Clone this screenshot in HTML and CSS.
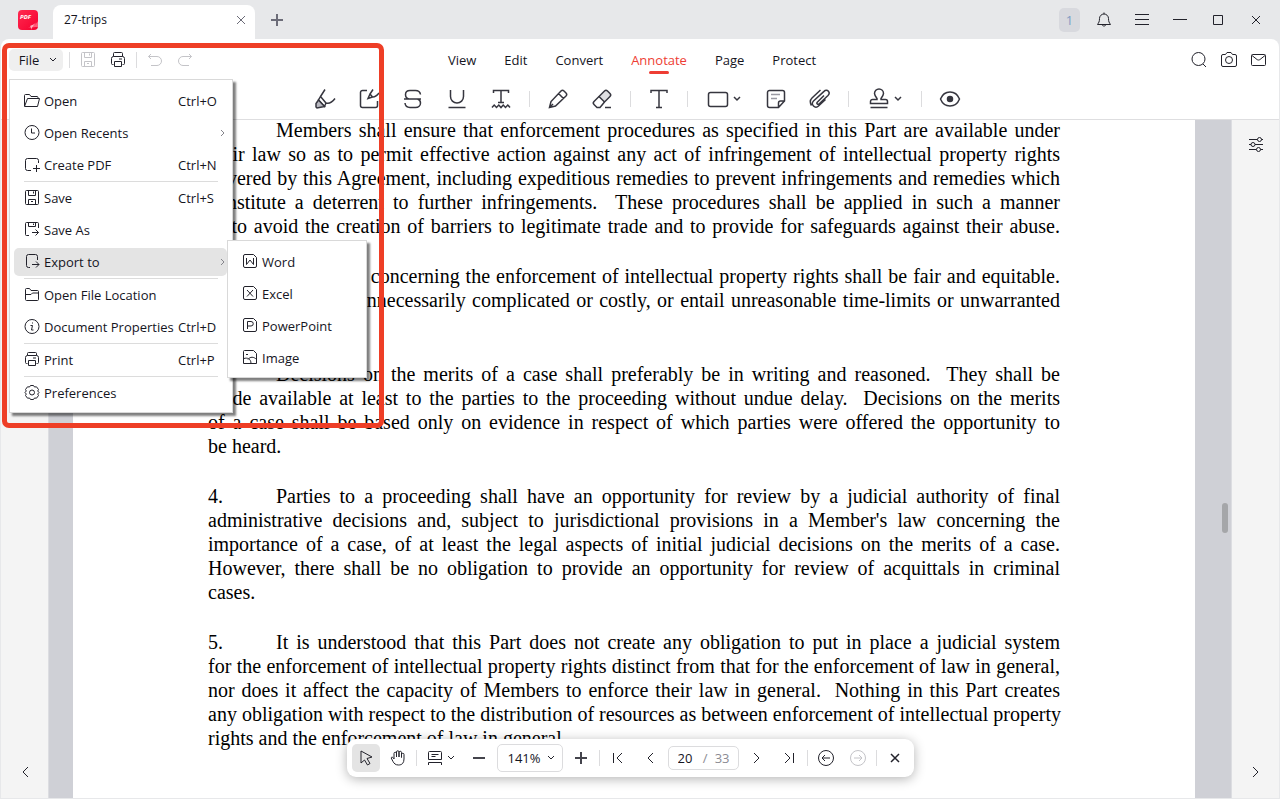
FILE: index.html
```
<!DOCTYPE html>
<html lang="en">
<head>
    <meta charset="UTF-8">
    <meta name="viewport" content="width=device-width, initial-scale=1.0">
    <title>27-trips</title>
    <link rel="stylesheet" href="styles.css">
</head>

<body>
    <header class="titlebar">
        <svg class="logo" viewBox="0 0 20 20" aria-hidden="true">
            <defs>
                <linearGradient id="logoRed" x1="0" y1="0" x2="1" y2="1">
                    <stop offset="0" stop-color="#ff2a50"/>
                    <stop offset="1" stop-color="#f5002f"/>
                </linearGradient>
            </defs>
            <rect width="20" height="20" rx="4" fill="url(#logoRed)"/>
            <path d="M20 11c-1 3-5 5-10 7 4-1 8-1 10-1z" fill="#ff5c78"/>
            <path d="M19 12c-2 2-5 3-7 4 1 1 1 2 1 4 1-3 2-4 6-8z" fill="#ffb3c0"/>
            <text x="2" y="9" class="logo-text">PDF</text>
        </svg>
        <div class="tab">
            <span>27-trips</span>
            <button type="button" class="tab-close" aria-label="Close tab">
                <svg width="10" height="10" viewBox="0 0 10 10"><path d="M1 1l8 8M9 1L1 9"/></svg>
            </button>
        </div>
        <button type="button" class="new-tab" aria-label="New tab">
            <svg width="12" height="12" viewBox="0 0 12 12"><path d="M6 0v12M0 6h12"/></svg>
        </button>
        <div class="window-buttons">
            <button type="button" class="badge">1</button>
            <button type="button" aria-label="Notifications">
                <svg width="16" height="16" viewBox="0 0 16 16"><path d="M8 .5v1.500M3.500 6.500a4.500 4.500 0 0 1 9 0c0 3.500.8 4 2 6H1.500c1.200-2 2-2.500 2-6zM6 12.500c.5 2 3.500 2 4 0"/></svg>
            </button>
            <button type="button" aria-label="Menu">
                <svg width="14" height="12" viewBox="0 0 14 12"><path d="M0 .5h14M0 5.500h14M0 10.500h14"/></svg>
            </button>
            <button type="button" aria-label="Minimize">
                <svg width="14" height="12" viewBox="0 0 14 12"><path d="M0 5.500h14"/></svg>
            </button>
            <button type="button" aria-label="Maximize">
                <svg width="10" height="10" viewBox="0 0 10 10"><path d="M.5.500h9v9h-9z"/></svg>
            </button>
            <button type="button" aria-label="Close">
                <svg width="10" height="10" viewBox="0 0 10 10"><path d="M1 1l8 8M9 1L1 9"/></svg>
            </button>
        </div>
    </header>

    <div class="app">
        <div class="ribbon">
            <div class="ribbon-top">
                <div class="quick">
                    <div class="file">
                        <button type="button" class="file-button">File
                            <svg width="8" height="6" viewBox="0 0 8 6"><path d="M1 1l3 3 3-3"/></svg>
                        </button>
                        <ul class="menu">
                            <li><button type="button">
                                <svg viewBox="0 0 16 16"><path d="M.5 13V2.500c0-.6.400-1 1-1h4L7 3.500h6c.6 0 1 .4 1 1v1M.5 13.500l3-8h12l-2 8z"/></svg>
                                <span>Open</span><kbd>Ctrl+O</kbd></button></li>
                            <li><button type="button">
                                <svg viewBox="0 0 16 16"><circle cx="8" cy="7.500" r="7"/><path d="M7.500 3.500v4.500H11"/></svg>
                                <span>Open Recents</span>
                                <svg class="arrow" viewBox="0 0 5 8"><path d="M1 1l3 3-3 3"/></svg></button></li>
                            <li><button type="button">
                                <svg viewBox="0 0 16 16"><path d="M7 13.500H3.500a2 2 0 0 1-2-2v-8a2 2 0 0 1 2-2h9a2 2 0 0 1 2 2V6M12.500 8v7M9 11.500h7"/></svg>
                                <span>Create PDF</span><kbd>Ctrl+N</kbd></button></li>
                            <li class="divider"></li>
                            <li><button type="button">
                                <svg viewBox="0 0 16 16"><path d="M2.500 .5h11a1 1 0 0 1 1 1v12a1 1 0 0 1-1 1h-11a1 1 0 0 1-1-1v-12a1 1 0 0 1 1-1zM4.500 .5v5h7v-5M4.500 14.500v-5h7v5M9.500 1.500v2M7 11.500h2"/></svg>
                                <span>Save</span><kbd>Ctrl+S</kbd></button></li>
                            <li><button type="button">
                                <svg viewBox="0 0 16 16"><path d="M5 13.500H2.500a1 1 0 0 1-1-1v-11a1 1 0 0 1 1-1h11a1 1 0 0 1 1 1V6M4.500 .5v4h7v-4M9.500 1.500v1.500M8 10.500h6.500M11.500 7.500l3 3-3 3"/></svg>
                                <span>Save As</span></button></li>
                            <li class="open"><button type="button">
                                <svg viewBox="0 0 16 16"><path d="M6 13.500H4.500a2 2 0 0 1-2-2v-9a2 2 0 0 1 2-2h7a2 2 0 0 1 2 2V6M8 10.500h7M12 7.500l3 3-3 3"/></svg>
                                <span>Export to</span>
                                <svg class="arrow" viewBox="0 0 5 8"><path d="M1 1l3 3-3 3"/></svg></button>
                                <ul class="menu submenu">
                                    <li><button type="button">
                                        <svg viewBox="0 0 16 16"><path d="M3 .5h8.500l3 3V12a1.500 1.500 0 0 1-1.500 1.500H3A1.500 1.500 0 0 1 1.500 12V2A1.500 1.500 0 0 1 3 .5zM4.500 4v6.500L8 6l3.500 4.500V4"/></svg>
                                        <span>Word</span></button></li>
                                    <li><button type="button">
                                        <svg viewBox="0 0 16 16"><path d="M3 .5h8.500l3 3V12a1.500 1.500 0 0 1-1.500 1.500H3A1.500 1.500 0 0 1 1.500 12V2A1.500 1.500 0 0 1 3 .5zM5 4l6 6.500M11 4l-6 6.500"/></svg>
                                        <span>Excel</span></button></li>
                                    <li><button type="button">
                                        <svg viewBox="0 0 16 16"><path d="M3 .5h8.500l3 3V12a1.500 1.500 0 0 1-1.500 1.500H3A1.500 1.500 0 0 1 1.500 12V2A1.500 1.500 0 0 1 3 .5zM5.500 11V3.500h3.500a2 2 0 0 1 0 4.500H5.500"/></svg>
                                        <span>PowerPoint</span></button></li>
                                    <li><button type="button">
                                        <svg viewBox="0 0 16 16"><path d="M2.500 .5h9l3 3v10h-13v-12a1 1 0 0 1 1-1zM2 8.500c3-1 7 0 7 5M6 9.500c2-3 6-3 8.500 0M4 4.500h2"/></svg>
                                        <span>Image</span></button></li>
                                </ul>
                            </li>
                            <li class="divider"></li>
                            <li><button type="button">
                                <svg viewBox="0 0 16 16"><path d="M1.500 12.500v-10c0-.6.400-1 1-1h3l1.500 2h6.500c.6 0 1 .4 1 1v8c0 .6-.4 1-1 1h-11c-.6 0-1-.4-1-1zM1.500 7.500H7l1.500-1.500h6"/></svg>
                                <span>Open File Location</span></button></li>
                            <li><button type="button">
                                <svg viewBox="0 0 16 16"><circle cx="8" cy="7.500" r="7"/><path d="M6.500 6.500h2l-1 4.500h2M8.500 3.500v1"/></svg>
                                <span>Document Properties</span><kbd>Ctrl+D</kbd></button></li>
                            <li class="divider"></li>
                            <li><button type="button">
                                <svg viewBox="0 0 16 16"><path d="M3.500 11.500h-1a1 1 0 0 1-1-1v-5a2 2 0 0 1 2-2h9a2 2 0 0 1 2 2v5a1 1 0 0 1-1 1h-1M3.500 3.500v-2a1 1 0 0 1 1-1h7a1 1 0 0 1 1 1v2M4.500 8.500h7v5h-7zM9 6h3"/></svg>
                                <span>Print</span><kbd>Ctrl+P</kbd></button></li>
                            <li class="divider"></li>
                            <li><button type="button">
                                <svg viewBox="0 0 16 16"><path d="M6.500.500h3l1 1.500 2-.2 2 2.700-.8 1.500L15 7.500 13.700 9l.8 1.500-2 2.700-2-.2-1 1.500h-3l-1-1.500-2 .2-2-2.700L2.300 9 1 7.500 2.300 6l-.8-1.500 2-2.700 2 .2z"/><circle cx="8" cy="7.500" r="2.500"/></svg>
                                <span>Preferences</span></button></li>
                        </ul>
                    </div>
                    <i class="line"></i>
                    <button type="button" class="icon faded" aria-label="Save">
                        <svg width="16" height="16" viewBox="0 0 16 16"><path d="M2.500 .5h11a1 1 0 0 1 1 1v12a1 1 0 0 1-1 1h-11a1 1 0 0 1-1-1v-12a1 1 0 0 1 1-1zM4.500 .5v5h7v-5M4.500 14.500v-5h7v5M9.500 1.500v2M7 11.500h2"/></svg>
                    </button>
                    <button type="button" class="icon" aria-label="Print">
                        <svg width="16" height="16" viewBox="0 0 16 16"><path d="M3.500 12.500h-1a1 1 0 0 1-1-1v-5a2 2 0 0 1 2-2h9a2 2 0 0 1 2 2v5a1 1 0 0 1-1 1h-1M3.500 4.500v-3a1 1 0 0 1 1-1h7a1 1 0 0 1 1 1v3M4.500 9.500h7v5h-7zM9 7h3"/></svg>
                    </button>
                    <i class="line"></i>
                    <button type="button" class="icon faded" aria-label="Undo">
                        <svg width="16" height="16" viewBox="0 0 16 16"><path d="M1.500 4.500H10a4.500 4.500 0 0 1 0 9H4M4 2L1.500 4.500 4 7"/></svg>
                    </button>
                    <button type="button" class="icon faded" aria-label="Redo">
                        <svg width="16" height="16" viewBox="0 0 16 16"><path d="M14.500 4.500H6a4.500 4.500 0 0 0 0 9h6M12 2l2.500 2.500L12 7"/></svg>
                    </button>
                </div>
                <nav class="tabs">
                    <a href="#view">View</a>
                    <a href="#edit">Edit</a>
                    <a href="#convert">Convert</a>
                    <a href="#annotate" class="active">Annotate</a>
                    <a href="#page">Page</a>
                    <a href="#protect">Protect</a>
                </nav>
                <div class="actions">
                    <button type="button" class="icon" aria-label="Search">
                        <svg width="16" height="16" viewBox="0 0 16 16"><circle cx="7.500" cy="7" r="6.500"/><path d="M12 12l3 3"/></svg>
                    </button>
                    <button type="button" class="icon" aria-label="Snapshot">
                        <svg width="16" height="16" viewBox="0 0 16 16"><path d="M2 2.500h2.500L6 .5h4l1.500 2H14A1.500 1.500 0 0 1 15.500 4v9a1.500 1.500 0 0 1-1.500 1.500H2A1.500 1.500 0 0 1 .5 13V4A1.500 1.500 0 0 1 2 2.500z"/><circle cx="8" cy="8" r="3.500"/></svg>
                    </button>
                    <button type="button" class="icon" aria-label="Mail">
                        <svg width="16" height="16" viewBox="0 0 16 16"><rect x=".5" y="2.500" width="14" height="11" rx="1"/><path d="M1 3.500l5 4c1 .7 2 .7 3 0l5-4"/></svg>
                    </button>
                </div>
            </div>

            <div class="tools">
                <button type="button" aria-label="Highlight">
                    <svg width="22" height="22" viewBox="0 0 22 22"><path d="M11 1.500L6.500 8.500l5.500 6.500c3 1 6-.5 9-4.500M6.500 8.500L4.500 12l6 6.500L12 15"/><path d="M4.500 12L2 15.500v3.500l1 1 7.500-1.500z" fill="#b9b9c1"/></svg>
                </button>
                <button type="button" aria-label="Area highlight">
                    <svg width="22" height="22" viewBox="0 0 22 22"><path d="M9 2.500H4.500a2 2 0 0 0-2 2v13a2 2 0 0 0 2 2h13a2 2 0 0 0 2-2V13M15 1.500l-3 4.500 2.500 3c2 .3 4-1 6.500-4M12 6l-2 4.500 4.500-1.500"/></svg>
                </button>
                <button type="button" aria-label="Strikethrough">
                    <svg width="22" height="22" viewBox="0 0 22 22"><path d="M2 11h17M18.500 6.500c-.5-3-3-4-5-4H8c-3 0-4.500 2-4.500 4S5 10.500 7 11M3 15c.3 3 2.500 4.500 5 4.500h5.500c3 0 5-2 5-4.500 0-2-1.500-3.500-3-4"/></svg>
                </button>
                <button type="button" aria-label="Underline">
                    <svg width="22" height="22" viewBox="0 0 22 22"><path d="M4.500 2v6.500a6.500 6.500 0 0 0 13 0V2M2.500 19.500h17"/></svg>
                </button>
                <button type="button" aria-label="Squiggly underline">
                    <svg width="22" height="22" viewBox="0 0 22 22"><path d="M3.500 5V2.500h15V5M11 2.500v12M8 14.500h6M2 19.500l2.200-2.500 2.300 2.500L8.800 17l2.200 2.500 2.200-2.500 2.300 2.500 2.300-2.500 2.200 2.500"/></svg>
                </button>
                <i class="line"></i>
                <button type="button" aria-label="Pencil">
                    <svg width="22" height="22" viewBox="0 0 22 22"><path d="M2.500 19.500l1.500-6L14 3c1-1 2-1 3 0l2 2c1 1 1 2 0 3L8.500 18zM11.500 5.500l5 5M2.500 19.500l3.500-3.500"/></svg>
                </button>
                <button type="button" aria-label="Eraser">
                    <svg width="22" height="22" viewBox="0 0 22 22"><path d="M8 8.500l5.500-5.500c1-1 2-1 3 0L19 5.500c1 1 1 2 0 3L13.500 14z" fill="#dfdfe2"/><path d="M8 8.500L3 13.500c-1 1-1 2 0 3l3 3h3l4.500-5.500M14 19.500h6"/></svg>
                </button>
                <i class="line"></i>
                <button type="button" aria-label="Text">
                    <svg width="22" height="22" viewBox="0 0 22 22"><path d="M3 5V2.500h16V5M11 2.500v17M8 19.500h6"/></svg>
                </button>
                <i class="line"></i>
                <button type="button" class="wide" aria-label="Shapes">
                    <svg width="22" height="22" viewBox="0 0 22 22"><rect x="1.500" y="4.500" width="19" height="14" rx="2"/></svg>
                    <svg width="8" height="6" viewBox="0 0 8 6"><path d="M1 1l3 3 3-3"/></svg>
                </button>
                <button type="button" aria-label="Note">
                    <svg width="22" height="22" viewBox="0 0 22 22"><path d="M4.500 2.500h13a2 2 0 0 1 2 2V13l-6 6.500h-9a2 2 0 0 1-2-2v-13a2 2 0 0 1 2-2zM13.500 19.500V15a2 2 0 0 1 2-2h4"/><path d="M6 6.500h9M6 10.500h6" stroke="#9a9aa3"/></svg>
                </button>
                <button type="button" aria-label="Attachment">
                    <svg width="22" height="22" viewBox="0 0 22 22"><path d="M15 7.500L8.500 14c-.7.700-.7 1.500-.2 2s1.300.5 2-.2l8.700-8.300c1.500-1.500 1.500-3 .4-4.300s-3-1.200-4.400.2L4.500 13c-1.500 1.500-1.500 3.500 0 5s3.500 1.500 5 0l7-6.500M11.500 2L3 10c-2 2-2 5-.5 7.500"/></svg>
                </button>
                <i class="line"></i>
                <button type="button" class="wide" aria-label="Stamp">
                    <svg width="22" height="22" viewBox="0 0 22 22"><path d="M9 10.500C7.500 8.500 6.500 7 6.500 5.500a4.500 4.500 0 0 1 9 0c0 1.500-1 3-2.500 5v1h4.500a2 2 0 0 1 2 2v2h-17v-2a2 2 0 0 1 2-2H9zM2.500 19.500h17"/></svg>
                    <svg width="8" height="6" viewBox="0 0 8 6"><path d="M1 1l3 3 3-3"/></svg>
                </button>
                <i class="line"></i>
                <button type="button" aria-label="Show annotations">
                    <svg width="22" height="22" viewBox="0 0 22 22"><path d="M1.500 11C3.500 6 7 4 11 4s7.500 2 9.500 7c-2 5-5.500 7-9.500 7s-7.500-2-9.500-7z"/><circle cx="11" cy="11" r="2.500" fill="#36363f"/></svg>
                </button>
            </div>
        </div>

        <div class="workspace">
            <aside class="side">
                <button type="button" class="icon" aria-label="Expand left panel">
                    <svg width="8" height="12" viewBox="0 0 8 12"><path d="M7 1L2 6l5 5"/></svg>
                </button>
            </aside>

            <main class="viewer">
                <article class="paper">
                    <p>
                        <span><b class="num"></b>Members shall ensure that enforcement procedures as specified in this Part are available under</span>
                        <span>their law so as to permit effective action against any act of infringement of intellectual property rights</span>
                        <span>covered by this Agreement, including expeditious remedies to prevent infringements and remedies which</span>
                        <span>constitute a deterrent to further infringements.&nbsp; These procedures shall be applied in such a manner</span>
                        <span>as to avoid the creation of barriers to legitimate trade and to provide for safeguards against their abuse.</span>
                    </p>
                    <p>
                        <span><b class="num">2.</b>Procedures concerning the enforcement of intellectual property rights shall be fair and equitable.</span>
                        <span>They shall not be unnecessarily complicated or costly, or entail unreasonable time-limits or unwarranted</span>
                        <span class="last">delays.</span>
                    </p>
                    <p>
                        <span><b class="num">3.</b>Decisions on the merits of a case shall preferably be in writing and reasoned.&nbsp; They shall be</span>
                        <span>made available at least to the parties to the proceeding without undue delay.&nbsp; Decisions on the merits</span>
                        <span>of a case shall be based only on evidence in respect of which parties were offered the opportunity to</span>
                        <span class="last">be heard.</span>
                    </p>
                    <p>
                        <span><b class="num">4.</b>Parties to a proceeding shall have an opportunity for review by a judicial authority of final</span>
                        <span>administrative decisions and, subject to jurisdictional provisions in a Member's law concerning the</span>
                        <span>importance of a case, of at least the legal aspects of initial judicial decisions on the merits of a case.</span>
                        <span>However, there shall be no obligation to provide an opportunity for review of acquittals in criminal</span>
                        <span class="last">cases.</span>
                    </p>
                    <p>
                        <span><b class="num">5.</b>It is understood that this Part does not create any obligation to put in place a judicial system</span>
                        <span>for the enforcement of intellectual property rights distinct from that for the enforcement of law in general,</span>
                        <span>nor does it affect the capacity of Members to enforce their law in general.&nbsp; Nothing in this Part creates</span>
                        <span>any obligation with respect to the distribution of resources as between enforcement of intellectual property</span>
                        <span class="last">rights and the enforcement of law in general.</span>
                    </p>
                </article>
                <div class="scroll-thumb"></div>

                <div class="pager-wrap">
                    <div class="pager">
                        <button type="button" class="selected" aria-label="Select">
                            <svg width="16" height="18" viewBox="0 0 16 18"><path d="M3 2l11 6-5 1.500 3 5-2.500 1.500-3-5L3 14z"/></svg>
                        </button>
                        <button type="button" aria-label="Hand">
                            <svg width="16" height="16" viewBox="0 0 16 16"><path d="M4 9V3.500a1.250 1.250 0 0 1 2.500 0V7 2a1.250 1.250 0 0 1 2.500 0v5-4.500a1.250 1.250 0 0 1 2.500 0V7.500 4.500a1.250 1.250 0 0 1 2.500 0V9c0 4-2 6-5.500 6-3 0-4.500-1.500-5.500-3.500L1.200 8C1.500 6.500 3 7 4 9"/></svg>
                        </button>
                        <i class="line"></i>
                        <button type="button" class="wide" aria-label="Display mode">
                            <svg width="16" height="16" viewBox="0 0 16 16"><path d="M2.500 1.500h11a1 1 0 0 1 1 1v7h-13v-7a1 1 0 0 1 1-1zM4.500 4.500h7M4.500 6.500h4M1.500 15v-2.500h13V15"/></svg>
                            <svg width="8" height="6" viewBox="0 0 8 6"><path d="M1 1l3 3 3-3"/></svg>
                        </button>
                        <button type="button" aria-label="Zoom out">
                            <svg class="bold" width="12" height="12" viewBox="0 0 12 12"><path d="M0 6h12"/></svg>
                        </button>
                        <label class="zoom">
                            <select aria-label="Zoom level"><option>141%</option></select>
                            <svg width="8" height="6" viewBox="0 0 8 6"><path d="M1 1l3 3 3-3"/></svg>
                        </label>
                        <button type="button" aria-label="Zoom in">
                            <svg class="bold" width="12" height="12" viewBox="0 0 12 12"><path d="M6 0v12M0 6h12"/></svg>
                        </button>
                        <i class="line"></i>
                        <button type="button" aria-label="First page">
                            <svg width="10" height="12" viewBox="0 0 10 12"><path d="M.5 1v10M9 1L4 6l5 5"/></svg>
                        </button>
                        <button type="button" aria-label="Previous page">
                            <svg width="8" height="12" viewBox="0 0 8 12"><path d="M7 1L2 6l5 5"/></svg>
                        </button>
                        <label class="page-number">
                            <input type="text" value="20" aria-label="Page number">
                            <span>/</span><span>33</span>
                        </label>
                        <button type="button" aria-label="Next page">
                            <svg width="8" height="12" viewBox="0 0 8 12"><path d="M1 1l5 5-5 5"/></svg>
                        </button>
                        <button type="button" aria-label="Last page">
                            <svg width="10" height="12" viewBox="0 0 10 12"><path d="M9.500 1v10M1 1l5 5-5 5"/></svg>
                        </button>
                        <i class="line"></i>
                        <button type="button" aria-label="Back">
                            <svg width="18" height="18" viewBox="0 0 18 18"><circle cx="9" cy="9" r="7.500"/><path d="M13 9H5M8 6L5 9l3 3"/></svg>
                        </button>
                        <button type="button" class="faded" aria-label="Forward">
                            <svg width="18" height="18" viewBox="0 0 18 18"><circle cx="9" cy="9" r="7.500"/><path d="M5 9h8M10 6l3 3-3 3"/></svg>
                        </button>
                        <i class="line"></i>
                        <button type="button" aria-label="Close toolbar">
                            <svg width="10" height="10" viewBox="0 0 10 10"><path d="M1 1l8 8M9 1L1 9" stroke-width="1.500"/></svg>
                        </button>
                    </div>
                </div>
            </main>

            <aside class="side">
                <button type="button" class="icon" aria-label="Properties">
                    <svg width="16" height="16" viewBox="0 0 16 16"><circle cx="11.500" cy="2.500" r="2"/><circle cx="5" cy="7.500" r="2"/><circle cx="10.500" cy="12.500" r="2"/><path d="M1 2.500h8.500M13.500 2.500H15M1 7.500h2M7 7.500h8M1 12.500h7.500M12.500 12.500H15"/></svg>
                </button>
                <button type="button" class="icon" aria-label="Expand right panel">
                    <svg width="8" height="12" viewBox="0 0 8 12"><path d="M1 1l5 5-5 5"/></svg>
                </button>
            </aside>
        </div>
    </div>

    <div class="marker"></div>
</body>
</html>
```
FILE: styles.css
```
* {
    margin: 0;
    padding: 0;
    box-sizing: border-box;
}

body {
    font-family: 'Open Sans', 'Segoe UI', sans-serif;
    font-size: 13px;
    line-height: 18px;
    color: #15151e;
    background-color: #e7e8ea;
    height: 100vh;
    display: flex;
    flex-direction: column;
    overflow: hidden;
}

button {
    font: inherit;
    color: inherit;
    background: none;
    border: none;
    display: flex;
    align-items: center;
    justify-content: center;
}

svg {
    fill: none;
    stroke: #22222b;
    flex-shrink: 0;
}

.bold {
    stroke: #44444c;
    stroke-width: 2;
}

.line {
    width: 1px;
    height: 16px;
    background-color: #dcdcde;
}

/* title bar */
.titlebar {
    height: 39px;
    display: flex;
    align-items: center;
    padding: 0 5px 0 18px;
}

.logo {
    width: 20px;
    height: 20px;
    stroke: none;
}

.logo-text {
    font-size: 6px;
    font-weight: bold;
    font-style: italic;
    fill: #fff;
}

.tab {
    align-self: flex-end;
    width: 202px;
    height: 34px;
    margin-left: 15px;
    padding: 0 9px 4px 11px;
    background-color: #fff;
    border-radius: 8px 8px 0 0;
    display: flex;
    align-items: center;
    justify-content: space-between;
    font-size: 12px;
}

.tab svg,
.new-tab svg {
    stroke: #6c6c78;
}

.new-tab {
    width: 24px;
    height: 24px;
    margin-left: 10px;
}

.new-tab svg {
    stroke-width: 2;
}

.window-buttons {
    display: flex;
    margin-left: auto;
}

.window-buttons button {
    width: 38px;
    height: 24px;
}

.window-buttons .badge {
    width: 21px;
    margin-right: 5px;
    border-radius: 5px;
    background-color: #d8d9de;
    color: #7f9cc4;
}

/* ribbon */
.app {
    flex: 1;
    min-height: 0;
    margin: 0 1px 1px;
    display: flex;
    flex-direction: column;
    border-radius: 8px 8px 0 0;
    background-color: #fff;
}

.ribbon {
    border-bottom: 1px solid #dedee0;
}

.ribbon-top {
    height: 41px;
    padding: 0 8px;
    display: grid;
    grid-template-columns: 1fr auto 1fr;
    align-items: center;
}

.quick {
    display: flex;
    align-items: center;
    gap: 6px;
}

.icon {
    width: 24px;
    height: 24px;
}

.faded svg {
    stroke: #c4c4c8;
}

.file {
    position: relative;
}

.file-button {
    width: 54px;
    height: 22px;
    gap: 10px;
    padding-left: 4px;
    border-radius: 5px;
    background-color: #efefef;
}

.tabs {
    display: flex;
    gap: 28px;
    margin-right: 16px;
}

.tabs a {
    color: inherit;
    text-decoration: none;
    position: relative;
}

.tabs .active {
    color: #ee3d34;
}

.tabs .active::after {
    content: '';
    position: absolute;
    left: 50%;
    bottom: -5px;
    width: 20px;
    height: 3px;
    margin-left: -10px;
    border-radius: 2px;
    background-color: #ee3d34;
}

.actions {
    display: flex;
    justify-content: flex-end;
    gap: 6px;
}

.tools {
    height: 39px;
    padding: 0 6px 2px 0;
    display: flex;
    align-items: center;
    justify-content: center;
    gap: 12px;
}

.tools button {
    width: 32px;
    height: 32px;
}

.tools .wide {
    width: 48px;
    gap: 4px;
}

.tools svg {
    stroke: #36363f;
    stroke-width: 1.5;
}

/* file menu */
.menu {
    position: absolute;
    top: calc(100% + 8px);
    left: 0;
    z-index: 10;
    width: 224px;
    padding: 5px 5px 3px 4px;
    list-style: none;
    background-color: #fff;
    border: 1px solid #d9d9d9;
    box-shadow: 3px 3px 2px rgba(0, 0, 0, 0.5);
}

.menu li {
    position: relative;
    height: 32px;
    padding: 2px 0;
}

.menu button {
    width: 100%;
    height: 28px;
    padding-left: 10px;
    gap: 4px;
    border-radius: 5px;
    text-align: left;
}

.menu button svg {
    width: 16px;
    height: 16px;
}

.menu button span {
    flex: 1;
    white-space: nowrap;
}

.menu kbd {
    font: inherit;
    width: 49px;
}

.menu button .arrow {
    width: 5px;
    height: 8px;
    margin-right: 2px;
    stroke: #85858c;
}

.menu .divider {
    height: 1px;
    padding: 0;
    margin: 0 9px 0 10px;
    background-color: #dcdcdc;
}

.menu .open > button {
    background-color: #e4e4e4;
}

.submenu {
    top: -6px;
    left: 100%;
    width: 140px;
}

/* document area */
.workspace {
    flex: 1;
    min-height: 0;
    display: flex;
}

.side {
    width: 47px;
    padding: 13px 0 14px;
    display: flex;
    flex-direction: column;
    align-items: center;
    background-color: #f4f4f4;
}

.side .icon:last-child {
    margin-top: auto;
}

.viewer {
    flex: 1;
    position: relative;
    overflow: hidden;
    padding: 0 36px 0 24px;
    background-color: #cfd0d6;
    border: solid #dcdde1;
    border-width: 0 1px;
}

.paper {
    height: 100%;
    padding: 0 135px;
    overflow: hidden;
    background-color: #fff;
    font-family: 'Liberation Serif', 'Times New Roman', serif;
    font-size: 20px;
    line-height: 24px;
    color: #000;
}

.paper p {
    margin-top: 26px;
}

.paper p:first-child {
    margin-top: -2px;
}

.paper span {
    display: block;
    white-space: nowrap;
    text-align: justify;
    text-align-last: justify;
}

.paper .last {
    text-align-last: left;
}

.num {
    display: inline-block;
    width: 68px;
    font-weight: normal;
    text-align-last: left;
}

.scroll-thumb {
    position: absolute;
    top: 56%;
    right: 3px;
    width: 6px;
    height: 30px;
    margin-top: 3px;
    border-radius: 3px;
    background-color: #a5a6a9;
}

/* floating page toolbar */
.pager-wrap {
    position: absolute;
    left: 0;
    right: 20px;
    bottom: 21px;
    display: flex;
    justify-content: center;
}

.pager {
    height: 38px;
    padding: 0 5px;
    display: flex;
    align-items: center;
    gap: 4px;
    background-color: #fff;
    border-radius: 9px;
    box-shadow: 0 2px 12px rgba(0, 0, 0, 0.3);
}

.pager button {
    width: 28px;
    height: 28px;
    border-radius: 5px;
}

.pager .wide {
    width: 40px;
    gap: 4px;
}

.pager .selected {
    background-color: #e4e4e4;
}

.zoom,
.page-number {
    display: flex;
    align-items: center;
    border: 1px solid #dcdcde;
    border-radius: 5px;
}

.zoom {
    width: 66px;
    height: 28px;
    padding: 0 7px 0 10px;
}

.zoom select,
.page-number input {
    font: inherit;
    color: inherit;
    border: none;
    outline: none;
    background: none;
    appearance: none;
}

.zoom select {
    flex: 1;
    min-width: 0;
}

.page-number {
    width: 71px;
    height: 24px;
    padding: 0 8px 0 9px;
    justify-content: space-between;
    color: #8b8b93;
}

.page-number input {
    width: 18px;
    color: #15151e;
}

/* red frame around the menu */
.marker {
    position: absolute;
    top: 43px;
    left: 2px;
    width: 382px;
    height: 385px;
    z-index: 20;
    border: 5px solid #ee3e26;
    border-radius: 7px;
    pointer-events: none;
}
```
